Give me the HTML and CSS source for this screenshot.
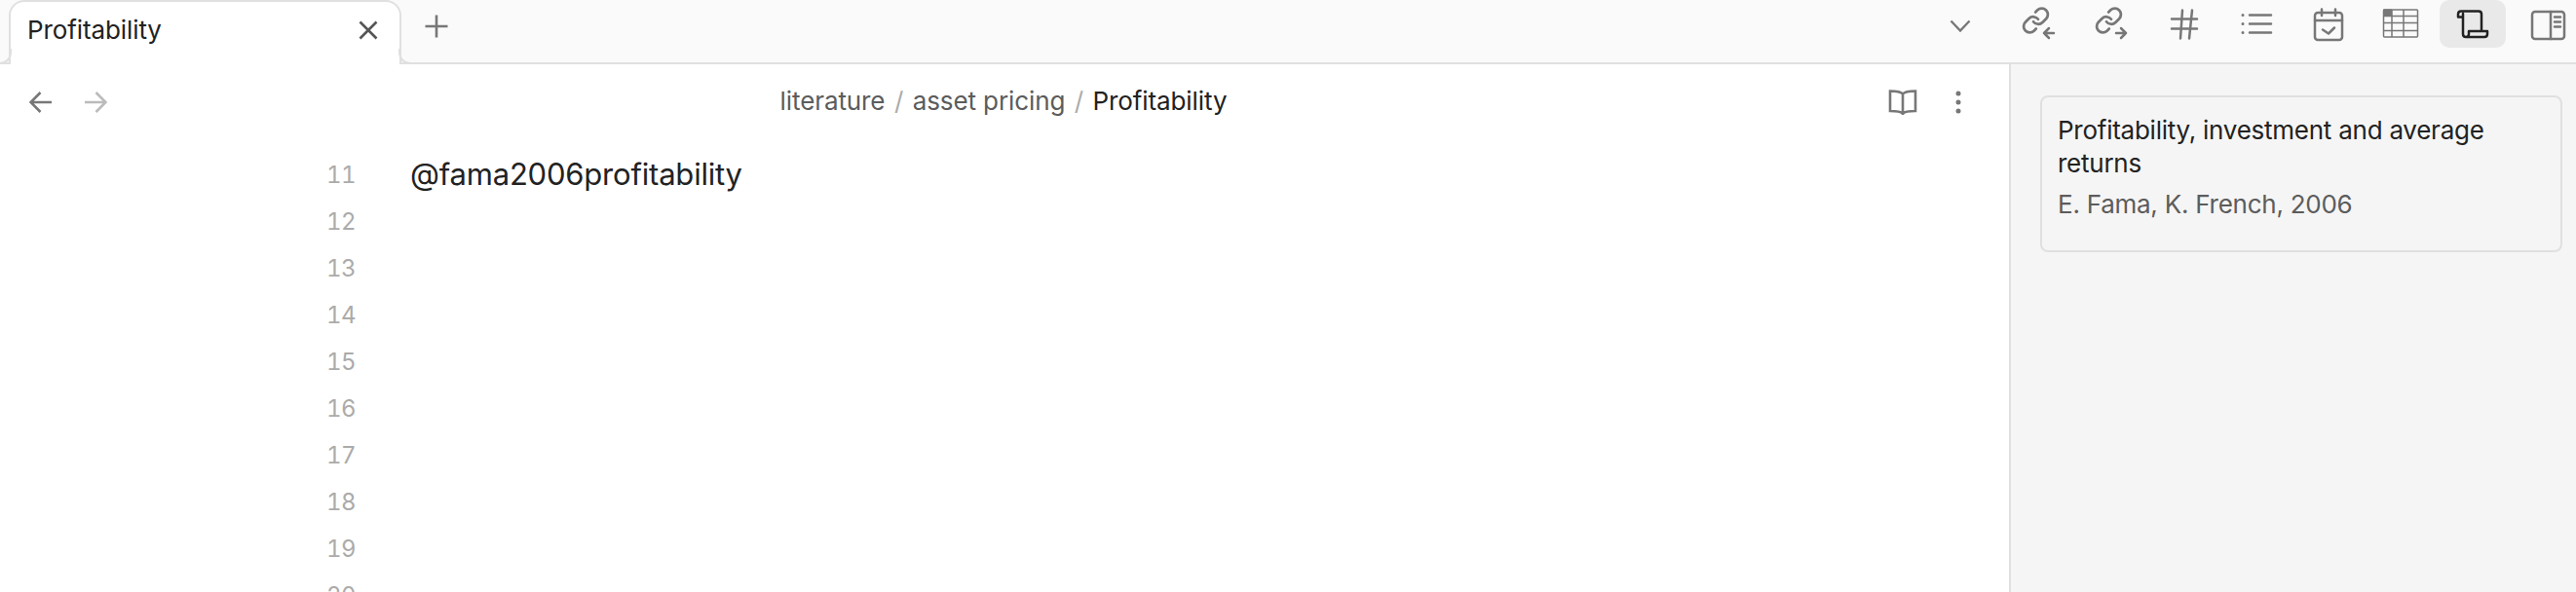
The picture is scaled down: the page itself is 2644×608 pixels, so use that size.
FILE: index.html
```html
<!DOCTYPE html>
<html lang="en">
<head>
<meta charset="utf-8">
<title>Profitability</title>
<link rel="stylesheet" href="styles.css">
</head>
<body>
<div class="app">
  <section class="main">
    <header class="tabbar">
      <div class="tab">
        <span class="tab-title">Profitability</span>
        <svg class="tab-close" width="20" height="20" viewBox="0 0 20 20"><path d="M1.500 1.500l17 17M18.500 1.500l-17 17"/></svg>
      </div>
      <svg class="tab-new" width="24" height="24" viewBox="0 0 24 24"><path d="M12 .5v23M.5 12h23"/></svg>
      <svg class="tab-list" width="22" height="13" viewBox="0 0 22 13"><path d="M1.500 1.500l9.500 10 9.500-10"/></svg>
    </header>
    <nav class="viewbar">
      <div class="history">
        <svg class="ico" width="24" height="24" viewBox="0 0 24 24"><path d="M23 12H2M11.500 2L1.500 12l10 10"/></svg>
        <svg class="ico faint" width="24" height="24" viewBox="0 0 24 24"><path d="M1 12h21M12.500 2l10 10-10 10"/></svg>
      </div>
      <div class="crumbs">
        <span class="crumb">literature</span><span class="sep">/</span><span class="crumb">asset pricing</span><span class="sep">/</span><span class="crumb current">Profitability</span>
      </div>
      <div class="view-actions">
        <svg class="ico" width="30" height="28" viewBox="0 0 30 28"><path d="M15 5.500C13 3 9 2.500 2 2.500v20.500c7 0 11 .5 13 2.500 2-2 6-2.500 13-2.500V2.500c-7 0-11 .5-13 3zM15 5.500V27"/></svg>
        <svg class="more" width="6" height="24" viewBox="0 0 6 24"><circle cx="3" cy="3" r="2.500"/><circle cx="3" cy="12" r="2.500"/><circle cx="3" cy="21" r="2.500"/></svg>
      </div>
    </nav>
    <div class="editor">
      <div class="line"><span class="num">11</span><span class="code">@fama2006profitability</span></div>
      <div class="line"><span class="num">12</span></div>
      <div class="line"><span class="num">13</span></div>
      <div class="line"><span class="num">14</span></div>
      <div class="line"><span class="num">15</span></div>
      <div class="line"><span class="num">16</span></div>
      <div class="line"><span class="num">17</span></div>
      <div class="line"><span class="num">18</span></div>
      <div class="line"><span class="num">19</span></div>
      <div class="line"><span class="num">20</span></div>
    </div>
  </section>
  <aside class="side">
    <header class="sidebar-tabs">
      <div class="side-btn"><svg width="40" height="40" viewBox="0 0 40 40"><g transform="translate(.5 1) scale(1.25)"><path class="thin" d="M10 13a5 5 0 0 0 7.540.540l3-3a5 5 0 0 0-7.070-7.070l-1.720 1.710"/><path class="thin" d="M14 11a5 5 0 0 0-7.540-.540l-3 3a5 5 0 0 0 7.070 7.070l1.710-1.710"/></g><path class="knock" d="M23 29h12"/><path d="M34 29H24M29 24l-5 5 5 5"/></svg></div>
      <div class="side-btn"><svg width="40" height="40" viewBox="0 0 40 40"><g transform="translate(1.500 1) scale(1.25)"><path class="thin" d="M10 13a5 5 0 0 0 7.540.540l3-3a5 5 0 0 0-7.070-7.070l-1.720 1.710"/><path class="thin" d="M14 11a5 5 0 0 0-7.540-.540l-3 3a5 5 0 0 0 7.070 7.070l1.710-1.710"/></g><path class="knock" d="M23 29h12"/><path d="M24 29h10M29 24l5 5-5 5"/></svg></div>
      <div class="side-btn"><svg width="40" height="40" viewBox="0 0 40 40"><path d="M7 14.500h26M7 24.500h26M18 5.500l-2 29M28 5.500l-3 29"/></svg></div>
      <div class="side-btn"><svg width="40" height="40" viewBox="0 0 40 40"><path d="M13 10.500h22M13 19.500h22M13 28.500h22"/><path class="dots" d="M6 10.500h.01M6 19.500h.01M6 28.500h.01"/></svg></div>
      <div class="side-btn"><svg width="40" height="40" viewBox="0 0 40 40"><rect x="6" y="8" width="28" height="28" rx="3"/><path d="M6 16h28M13 4.500V11M27 4.500V11M14 25.500l6 4 6-6"/></svg></div>
      <div class="side-btn"><svg class="table" width="40" height="40" viewBox="0 0 40 40"><rect class="cell" x="2" y="4.500" width="9" height="7"/><rect x="2.500" y="5" width="35" height="28" rx="1"/><path d="M11 5v28M23 5v28M2.500 11.500h35M2.500 18.500h35M2.500 26.500h35"/></svg></div>
      <div class="side-btn active"><svg width="40" height="40" viewBox="0 0 40 40"><path d="M8 6.500h18q3 0 3 3V27M8 6.500q-3 0-3 3v3h5M10 9v21q0 3 3 3h19q3 0 3-3v-3H16v3q0 3-3 3"/></svg></div>
      <div class="side-btn last"><svg width="40" height="40" viewBox="0 0 40 40"><rect x="3" y="7" width="33" height="28" rx="3"/><path d="M22 7v28M26 12.500h6M26 17.500h6M26 22.500h6"/></svg></div>
    </header>
    <div class="side-body">
      <article class="card">
        <div class="card-title">Profitability, investment and average returns</div>
        <div class="card-meta">E. Fama, K. French, 2006</div>
      </article>
    </div>
  </aside>
</div>
</body>
</html>
```
FILE: styles.css
```css
* { box-sizing: border-box; }
html, body { margin: 0; height: 100%; overflow: hidden; background: #fff; }
body { font-family: Inter, "Noto Sans", sans-serif; color: #222; }
svg { display: block; fill: none; flex: none; }

.app { display: grid; grid-template-columns: 2062px 582px; height: 608px; overflow: hidden; }
.main { display: flex; flex-direction: column; min-width: 0; }

.tabbar { height: 66px; flex: none; display: flex; align-items: flex-start; background: #fafafa; border-bottom: 2px solid #e0e0e0; padding-left: 9px; }
.tab { position: relative; width: 403px; height: 66px; background: #fff; border: 2px solid #e0e0e0; border-bottom: 0; border-radius: 16px 16px 0 0; display: flex; align-items: center; justify-content: space-between; padding: 0 22px 6px 17px; font-size: 26px; letter-spacing: -0.1px; }
.tab::before, .tab::after { content: ""; position: absolute; bottom: 0; width: 12px; height: 14px; border-bottom: 2px solid #e0e0e0; }
.tab::before { left: -13px; border-right: 2px solid #e0e0e0; border-bottom-right-radius: 12px; }
.tab::after { right: -13px; border-left: 2px solid #e0e0e0; border-bottom-left-radius: 12px; }
.tab-title { line-height: 30px; }
.tab-close path { stroke: #555; stroke-width: 2.6; }
.tab-new { margin: 15px 0 0 24px; }
.tab-new path { stroke: #777; stroke-width: 2.6; }
.tab-list { margin: 20px 39px 0 auto; }
.tab-list path { stroke: #777; stroke-width: 2.4; }

.viewbar { height: 78px; flex: none; display: grid; grid-template-columns: 1fr auto 1fr; align-items: center; padding: 0 32px 0 30px; }
.history { display: flex; gap: 32px; }
.ico path { stroke: #777; stroke-width: 2.6; }
.ico.faint path { stroke: #bbb; }
.crumbs { display: flex; align-items: center; font-size: 26px; line-height: 34px; color: #5c5c5c; letter-spacing: -0.1px; padding-bottom: 2px; }
.sep { color: #ababab; margin: 0 9.5px; }
.crumb.current { color: #222; }
.view-actions { display: flex; align-items: center; gap: 39px; justify-content: flex-end; margin-right: 17px; }
.more circle { fill: #777; }

.editor { padding-top: 11px; }
.line { height: 48px; display: flex; align-items: center; }
.num { width: 365px; text-align: right; font-size: 24px; letter-spacing: -0.6px; color: #ababab; flex: none; font-variant-numeric: tabular-nums; }
.code { margin: 0 0 2px 56px; font-size: 31px; letter-spacing: -0.2px; color: #222; }

.side { display: flex; flex-direction: column; border-left: 2px solid #e0e0e0; background: #f5f5f5; min-width: 0; }
.sidebar-tabs { height: 66px; flex: none; display: flex; gap: 6px; margin-left: -4px; background: #fafafa; border-bottom: 2px solid #e0e0e0; align-items: flex-start; overflow: hidden; }
.side-btn { width: 68px; height: 49px; flex: none; display: flex; align-items: center; justify-content: center; border-radius: 10px; }
.side-btn.last { margin-left: 4px; }
.side-btn svg path, .side-btn svg rect { stroke: #777; stroke-width: 2.5; stroke-linecap: round; stroke-linejoin: round; }
.side-btn svg path.thin { stroke-width: 2.2; }
.side-btn svg path.knock { stroke: #fafafa; stroke-width: 11; }
.side-btn svg path.dots { stroke-width: 3; }
.side-btn svg.table path, .side-btn svg.table rect { stroke-width: 1.5; stroke-linecap: butt; stroke-linejoin: miter; }
.side-btn svg.table rect.cell { fill: #777; stroke: none; }
.side-btn.active { background: #e9e9e9; }
.side-btn.active svg path { stroke: #222; }

.side-body { padding: 32px 14px 0 30px; }
.card { height: 161px; padding: 17px 17px 0 16px; border: 2px solid #e0e0e0; border-radius: 8px; font-size: 26px; line-height: 34px; letter-spacing: -0.25px; }
.card-title { color: #222; }
.card-meta { color: #5c5c5c; margin-top: 8px; }
```
